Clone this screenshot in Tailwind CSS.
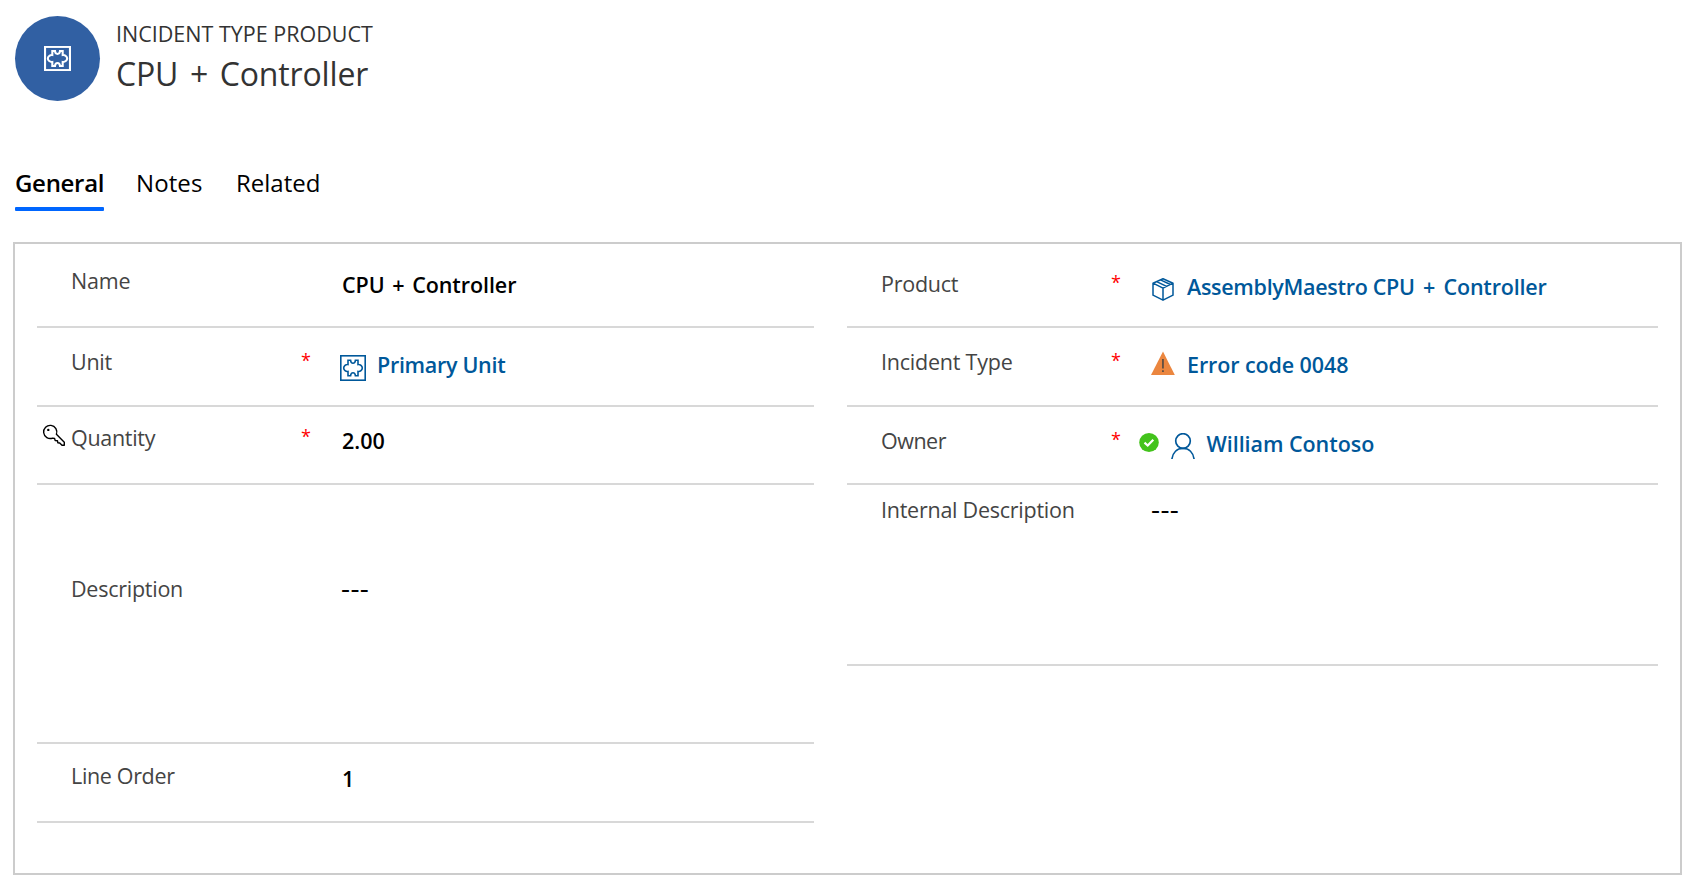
<!DOCTYPE html>
<html lang="en">
<head>
<meta charset="utf-8">
<title>CPU + Controller</title>
<script src="https://cdn.jsdelivr.net/npm/@tailwindcss/browser@4"></script>
</head>
<body class="h-[887px] overflow-hidden bg-white font-['Open_Sans','Noto_Sans',sans-serif] text-[21.5px] leading-[29px] text-black">

<header class="flex pl-[15px] pt-4">
  <div class="flex size-[85px] items-center justify-center rounded-full bg-[#3160a3]">
    <svg class="h-[25px] w-[27px]" viewBox="0 0 26 26" preserveAspectRatio="none" fill="none" stroke="#fff">
      <rect x="1" y="1" width="24" height="24" stroke-width="2"/>
      <path stroke-width="2" d="M8 9.500V5.200H10.600C10.900 9.300 15.100 9.300 15.400 5.200H18V9.500C20.200 9.100 22.300 11 22.300 13S20.200 16.900 18 16.500V20.800H15.400C15.100 16.700 10.900 16.700 10.600 20.800H8V16.500C5.800 16.900 3.700 15 3.700 13S5.800 9.100 8 9.500Z"/>
    </svg>
  </div>
  <div class="pl-4 pt-[3px] text-[#333]">
    <div>INCIDENT TYPE PRODUCT</div>
    <h1 class="mt-1 text-[32px] leading-[43px] tracking-[-0.15px] [word-spacing:3.500px]">CPU + Controller</h1>
  </div>
</header>

<nav class="mt-[65px] flex pl-[15px] text-2xl leading-[33px]">
  <div class="w-[89px] whitespace-nowrap font-semibold tracking-[-0.3px]">General<div class="mt-2 h-1 rounded-[1px] bg-[#0066ff]"></div></div>
  <div class="ml-8 w-[100px] tracking-[0.1px]">Notes</div>
  <div>Related</div>
</nav>

<main class="ml-[13px] mt-[31px] flex h-[633px] w-[1669px] items-start gap-[33px] border-2 border-[#ccc] px-[22px] text-[#444]">
  <section class="w-[777px]">
    <div class="flex h-[84px] items-start border-b-2 border-[#d8d8d8] pl-[34px]">
      <div class="w-[271px] pt-[22px] tracking-[-0.2px]">Name</div>
      <div class="pt-[26px] font-semibold tracking-[-0.08px] text-black [word-spacing:2.200px]">CPU + Controller</div>
    </div>
    <div class="flex h-[79px] items-start border-b-2 border-[#d8d8d8] pl-[34px]">
      <div class="w-[230px] pt-[19px] tracking-[-0.25px]">Unit</div>
      <div class="w-[40px] pt-[22px] text-[18px] leading-5 text-[#f00]">*</div>
      <svg class="-ml-px mt-[27px] size-[26px]" viewBox="0 0 26 26" fill="none" stroke="#00589a">
        <rect x=".8" y=".8" width="24.400" height="24.400" stroke-width="1.600"/>
        <path stroke-width="1.600" d="M8 9.500V5.200H10.600C10.900 9.300 15.100 9.300 15.400 5.200H18V9.500C20.200 9.100 22.300 11 22.300 13S20.200 16.900 18 16.500V20.800H15.400C15.100 16.700 10.900 16.700 10.600 20.800H8V16.500C5.800 16.900 3.700 15 3.700 13S5.800 9.100 8 9.500Z"/>
      </svg>
      <div class="pl-[11px] pt-[22px] font-semibold tracking-[-0.3px] text-[#00589a]">Primary Unit</div>
    </div>
    <div class="flex h-[78px] items-start border-b-2 border-[#d8d8d8] pl-[5px]">
      <svg class="mt-4 size-6" viewBox="0 0 24 24" fill="none" stroke="#000" stroke-width="1.400" stroke-linejoin="round">
        <path d="M14.400 11.300A6.600 6.600 0 1 0 10.600 15.100L12.600 15.500L13.200 17.600L15.500 17.800L15.800 19.700L17.700 20L20 22.300H22.300V19.200Z"/>
        <circle cx="6.300" cy="6.900" r="1.200" fill="#000" stroke="none"/>
      </svg>
      <div class="ml-[5px] w-[230px] pt-4 tracking-[-0.3px]">Quantity</div>
      <div class="w-[41px] pt-[19px] text-[18px] leading-5 text-[#f00]">*</div>
      <div class="pt-[19px] font-semibold text-black">2.00</div>
    </div>
    <div class="flex h-[259px] items-start border-b-2 border-[#d8d8d8] pl-[34px]">
      <div class="w-[270px] pt-[89px] tracking-[-0.25px]">Description</div>
      <div class="pt-[88px] text-[28px] tracking-[0.4px] text-black">---</div>
    </div>
    <div class="flex h-[79px] items-start border-b-2 border-[#d8d8d8] pl-[34px]">
      <div class="w-[271px] pt-[17px] tracking-[-0.34px]">Line Order</div>
      <div class="pt-5 font-semibold text-black">1</div>
    </div>
  </section>

  <section class="w-[811px]">
    <div class="flex h-[84px] items-start border-b-2 border-[#d8d8d8] pl-[34px]">
      <div class="w-[230px] pt-[25px] tracking-[-0.25px]">Product</div>
      <div class="w-[40px] pt-[28px] text-[18px] leading-5 text-[#f00]">*</div>
      <svg class="mt-[33px] size-6" viewBox="0 0 24 24" fill="none" stroke="#00589a" stroke-width="1.500" stroke-linejoin="round">
        <path d="M12 1.700L22 6.200V18.200L12 23.200L2 18.200V6.200ZM2 6.200L12 11.200L22 6.200M12 11.200V23.200M9.400 2.900L19.400 7.500M5.600 4.600L15.600 9.400"/>
      </svg>
      <div class="pl-3 pt-7 font-semibold tracking-[-0.200px] text-[#00589a]"><span class="tracking-[-0.3px]">AssemblyMaestro CPU</span><span class="[word-spacing:3px]"> + Controller</span></div>
    </div>
    <div class="flex h-[79px] items-start border-b-2 border-[#d8d8d8] pl-[34px]">
      <div class="w-[230px] pt-[19px] tracking-[-0.22px]">Incident Type</div>
      <div class="w-[40px] pt-[22px] text-[18px] leading-5 text-[#f00]">*</div>
      <svg class="mt-[23px] size-6" viewBox="0 0 24 24">
        <path d="M12 .5L23.800 24H0Z" fill="#eb863f"/>
        <path d="M11.200 8h1.500v9.500h-1.500zM11.200 19.300h1.500v1.700h-1.500z" fill="#444"/>
      </svg>
      <div class="pl-3 pt-[22px] font-semibold tracking-[-0.1px] text-[#00589a]">Error code 0048</div>
    </div>
    <div class="flex h-[78px] items-start border-b-2 border-[#d8d8d8] pl-[34px]">
      <div class="w-[230px] pt-[19px] tracking-[-0.5px]">Owner</div>
      <div class="w-[28px] pt-[22px] text-[18px] leading-5 text-[#f00]">*</div>
      <svg class="mt-[26px] h-[19px] w-5" viewBox="0 0 20 19" fill="none">
        <ellipse cx="10" cy="9.500" rx="9.800" ry="9.500" fill="#43c31c"/>
        <path d="M5.500 9.700L8.700 12.500L14.300 6.700" stroke="#fff" stroke-width="2.200"/>
      </svg>
      <svg class="ml-3 mt-[26px] h-[26px] w-6" viewBox="0 0 24 26" fill="none" stroke="#00589a" stroke-width="1.700">
        <circle cx="12" cy="8" r="7.300"/>
        <path d="M.9 26C1.800 19.500 6 15.400 12 15.400S22.200 19.500 23.100 26"/>
      </svg>
      <div class="pl-[11.500px] pt-[22px] font-semibold tracking-[-0.05px] text-[#00589a]">William Contoso</div>
    </div>
    <div class="flex h-[181px] items-start border-b-2 border-[#d8d8d8] pl-[34px]">
      <div class="w-[270px] pt-2.5 tracking-[-0.25px]">Internal Description</div>
      <div class="pt-[9px] text-[28px] tracking-[0.4px] text-black">---</div>
    </div>
  </section>
</main>
</body>
</html>
